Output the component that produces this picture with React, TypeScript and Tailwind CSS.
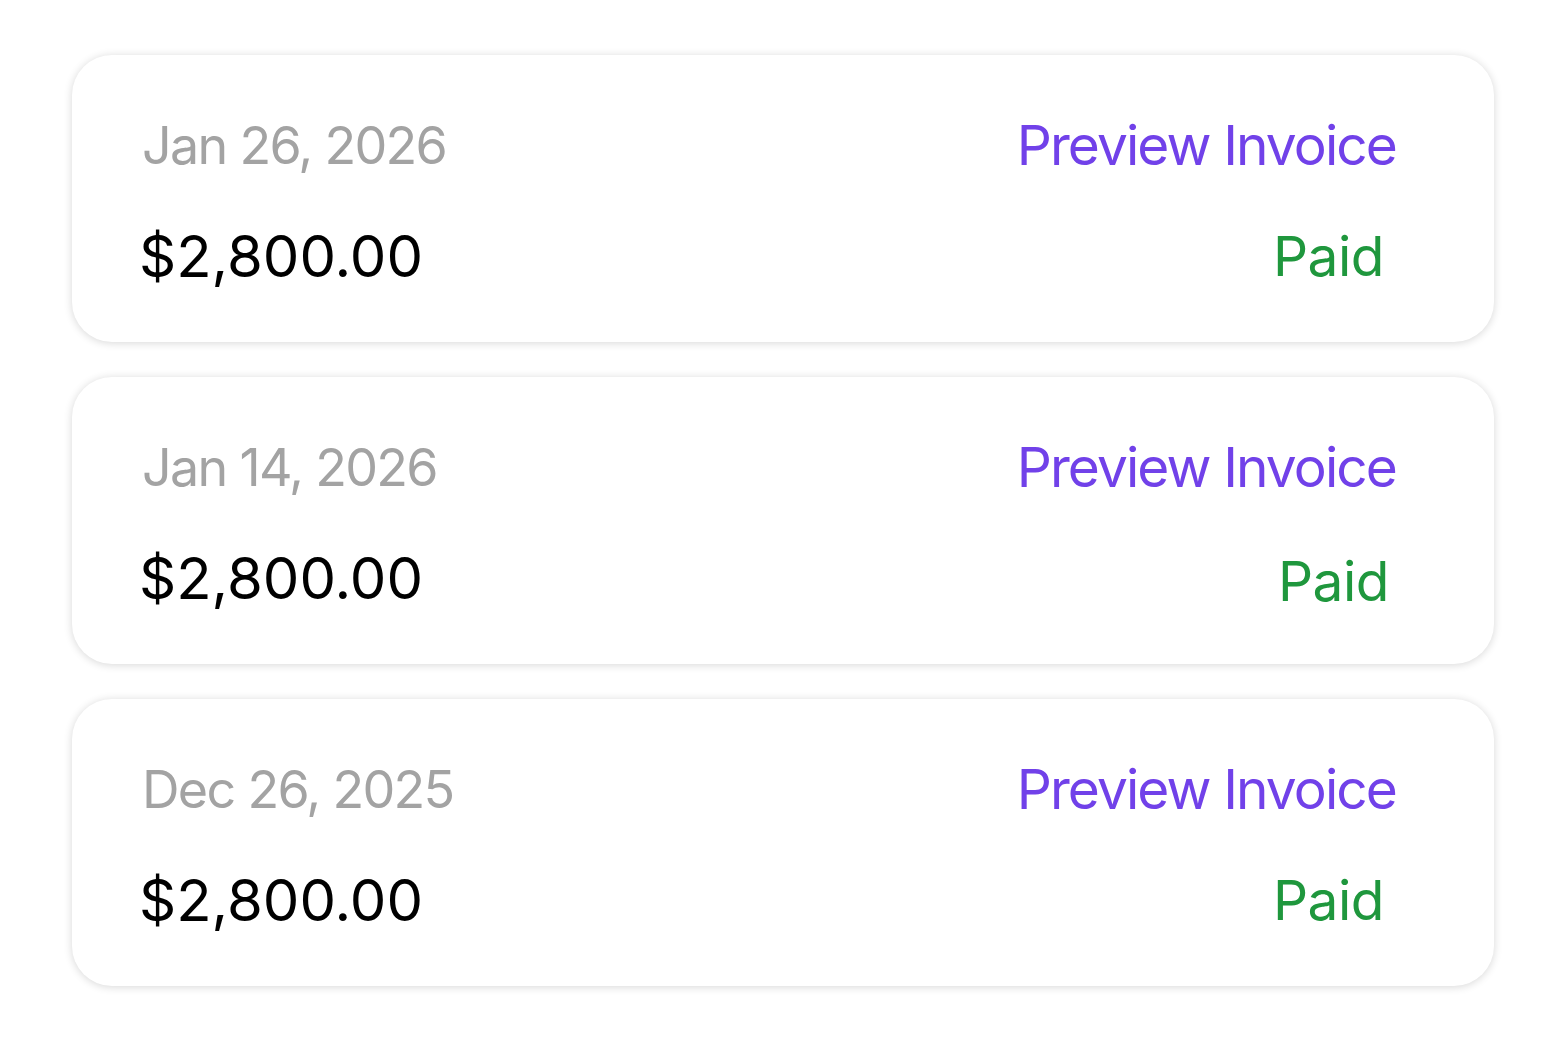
const invoices = [
  { date: "Jan 26, 2026", amount: "$2,800.00", status: "Paid", nudge: "mr-[12px] mt-[56px]" },
  { date: "Jan 14, 2026", amount: "$2,800.00", status: "Paid", nudge: "mr-[7px] mt-[59px]" },
  { date: "Dec 26, 2025", amount: "$2,800.00", status: "Paid", nudge: "mr-[12px] mt-[56px]" },
];

function InvoiceCard({ date, amount, status, nudge }: (typeof invoices)[number]) {
  return (
    <div className="flex h-[287px] justify-between rounded-[40px] bg-white pl-[67px] pr-[98px] shadow-[0_1px_8px_rgba(0,0,0,0.16)]">
      {/* left: date + amount */}
      <div className="flex flex-col pt-[65px]">
        <span className="ml-[3px] text-[52px] leading-none tracking-[-1.7px] text-[#a3a3a3]">{date}</span>
        <span className="mt-[55px] text-[58px] leading-none tracking-[0px] text-black">{amount}</span>
      </div>

      {/* right: link + status */}
      <div className="flex flex-col items-end pt-[63px]">
        <button className="text-[55px] leading-none tracking-[-1.9px] text-[#7141e9]">Preview Invoice</button>
        <span className={`text-[55px] leading-none tracking-[-0.5px] text-[#1f973d] ${nudge}`}>{status}</span>
      </div>
    </div>
  );
}

export default function App() {
  return (
    <div className="min-h-screen bg-white px-[72px] pt-[55px] font-['Inter',sans-serif]">
      <div className="flex flex-col gap-[35px]">
        {invoices.map((inv) => (
          <InvoiceCard key={inv.date} {...inv} />
        ))}
      </div>
    </div>
  );
}
